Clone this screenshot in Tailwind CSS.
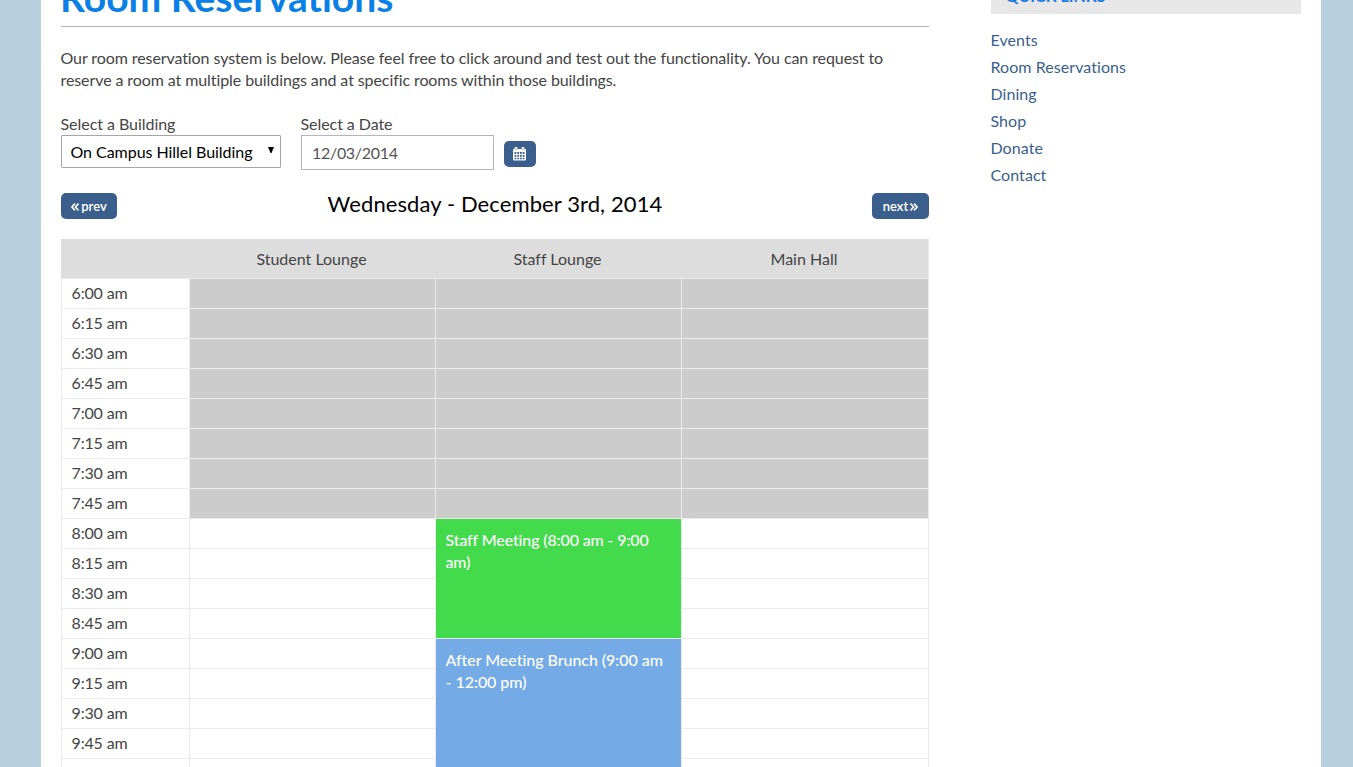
<!DOCTYPE html>
<html lang="en">
<head>
<meta charset="utf-8">
<title>Room Reservations</title>
<script src="https://cdn.jsdelivr.net/npm/@tailwindcss/browser@4"></script>
</head>
<body class="h-[767px] overflow-hidden bg-[#b8cfdd] font-[Lato,sans-serif] text-[16px] leading-[22px] text-[#444] [font-variant-ligatures:none]">
<div class="ml-[41px] flex h-full w-[1280px] items-start overflow-hidden bg-white pl-5">
  <main class="w-[868px] shrink-0">
    <h1 class="-mt-[29px] -ml-px h-[56px] text-[39px] leading-[52px] font-bold text-[#0a7fe6]"><span>Room Reservations</span></h1>
    <div class="-mt-px h-px bg-[#b5b5b5]"></div>
    <p class="mt-5 -ml-[0.5px] whitespace-nowrap tracking-[-0.09px]">Our room reservation system is below. Please feel free to click around and test out the functionality. You can request to<br>reserve a room at multiple buildings and at specific rooms within those buildings.</p>
    <div class="mt-[22px] flex items-start">
      <div class="w-[240px]">
        <div class="-ml-[0.5px] tracking-[-0.04px]">Select a Building</div>
        <div class="flex h-[33px] w-[220px] items-center justify-between rounded-[1px] border border-[#a6a6a6] bg-white pr-[6px] pl-[8.5px] tracking-[-0.04px] text-black"><span>On Campus Hillel Building</span>
          <svg class="-mt-[3px] h-[6px] w-[6px]" viewBox="0 0 6 6"><path d="M0 0H6L3.5 6H2.5Z" fill="#000"/></svg></div>
      </div>
      <div class="w-[203px]">
        <div class="-ml-[0.5px] tracking-[-0.06px]">Select a Date</div>
        <div class="flex h-[35px] w-[193px] items-center border border-[#b5b5b5] pt-px pl-[10px] tracking-[-0.3px] text-[#555]"><span>12/03/2014</span></div>
      </div>
      <button class="mt-[28px] flex h-[26px] w-8 items-center justify-center rounded-[5px] bg-[#3b5f8d] pr-px">
        <svg class="h-[14px] w-[13px]" viewBox="0 0 13 14"><path fill="#fff" fill-rule="evenodd" d="M2.500 0h1q1 0 1 1v1h4v-1q0-1 1-1h1q1 0 1 1v1h.5q1 0 1 1v9.500q0 1-1 1h-11q-1 0-1-1v-9.500q0-1 1-1h.5v-1q0-1 1-1zM1.500 5v2h1.800v-2zM4.300 5v2h1.800v-2zM7 5v2h1.800v-2zM9.700 5v2h1.800v-2zM1.500 8v1.800h1.800v-1.800zM4.300 8v1.800h1.800v-1.800zM7 8v1.800h1.800v-1.800zM9.700 8v1.800h1.800v-1.800zM1.500 10.800v1.500h1.800v-1.500zM4.300 10.800v1.500h1.800v-1.500zM7 10.800v1.500h1.800v-1.500zM9.700 10.800v1.500h1.800v-1.500z"/><path stroke="#3b5f8d" stroke-width=".6" d="M3 1v2M10 1v2"/></svg>
      </button>
    </div>
    <div class="mt-[23px] flex h-[26px] justify-between">
      <button class="flex h-[26px] w-[56px] items-center justify-center gap-[2px] rounded-[5px] bg-[#3b5f8d] text-[13px] leading-[22px] font-semibold text-white"><svg class="mt-px h-[8px] w-[8px]" viewBox="0 0 8 8" fill="none" stroke="#fff" stroke-width="1.6"><path d="M4 .6L.9 4L4 7.400M7.500 .6L4.400 4L7.500 7.400"/></svg><span>prev</span></button>
      <h2 class="pl-px text-[22px] leading-[22px] tracking-[0.1px] text-black"><span>Wednesday - December 3rd, 2014</span></h2>
      <button class="flex h-[26px] w-[57px] items-center justify-center gap-[2px] rounded-[5px] bg-[#3b5f8d] text-[13px] leading-[22px] font-semibold text-white"><span>next</span><svg class="mt-px h-[8px] w-[8px]" viewBox="0 0 8 8" fill="none" stroke="#fff" stroke-width="1.6"><path d="M.5 .6L3.600 4L.5 7.400M4 .6L7.100 4L4 7.400"/></svg></button>
    </div>
    <div id="schedule" class="mt-5 grid auto-rows-[30px] grid-cols-[129px_246px_246px_247px] grid-rows-[40px]">
      <div class="border-b border-[#ebebeb] bg-[#ddd]"></div>
      <div class="border-b border-[#ebebeb] bg-[#ddd] pt-[9px] pr-[3px] text-center">Student Lounge</div>
      <div class="border-b border-[#ebebeb] bg-[#ddd] pt-[9px] pr-[3px] text-center">Staff Lounge</div>
      <div class="border-r border-b border-[#ebebeb] bg-[#ddd] pt-[9px] pr-[2px] text-center">Main Hall</div>
    </div>
  </main>
  <aside class="ml-[62px] w-[310px]">
    <div class="-mt-[26px] h-10 bg-[#e7e7e7] pt-[11px] pl-[14.5px] font-bold text-[#1a7be0]"><span>QUICK LINKS</span></div>
    <ul class="mt-3 -ml-[0.5px] leading-[27px] tracking-[0.06px] text-[#3b5f8d]">
      <li>Events</li><li>Room Reservations</li><li>Dining</li><li>Shop</li><li>Donate</li><li>Contact</li>
    </ul>
  </aside>
</div>
<script>
const grid = document.getElementById('schedule');
function cell(cls, row, col, span, text) {
  const d = document.createElement('div');
  d.className = cls;
  d.style.gridArea = row + ' / ' + col + ' / span ' + span;
  d.textContent = text;
  grid.appendChild(d);
}
for (let i = 0; i < 16; i++) {
  const row = i + 2;
  const time = (6 + Math.floor(i / 4)) + ':' + String(i % 4 * 15).padStart(2, '0') + ' am';
  cell('border-x border-b border-[#ebebeb] pl-[9.5px] pt-[3px] tracking-[-0.15px]', row, 1, 1, time);
  for (let c = 2; c < 5; c++) {
    if (c === 3 && i >= 8) continue;
    cell(i < 8 ? 'border-r border-b border-[#ebebeb] bg-[#ccc]' : 'border-r border-b border-[#ebebeb]', row, c, 1, '');
  }
}
cell('border-x border-[#ebebeb]', 18, 1, 1, '');
cell('border-r border-[#ebebeb]', 18, 2, 1, '');
cell('border-r border-[#ebebeb]', 18, 4, 1, '');
cell('border-r border-b border-[#ebebeb] bg-[#43db4b] text-white font-medium pl-[9.5px] pr-[10px] pt-[10px] tracking-[-0.13px]', 10, 3, 4, 'Staff Meeting (8:00 am - 9:00 am)');
cell('border-r border-b border-[#ebebeb] bg-[#74aae6] text-white font-medium pl-[9.5px] pr-[14px] pt-[10px] tracking-[-0.04px]', 14, 3, 5, 'After Meeting Brunch (9:00 am - 12:00 pm)');
</script>
</body>
</html>
